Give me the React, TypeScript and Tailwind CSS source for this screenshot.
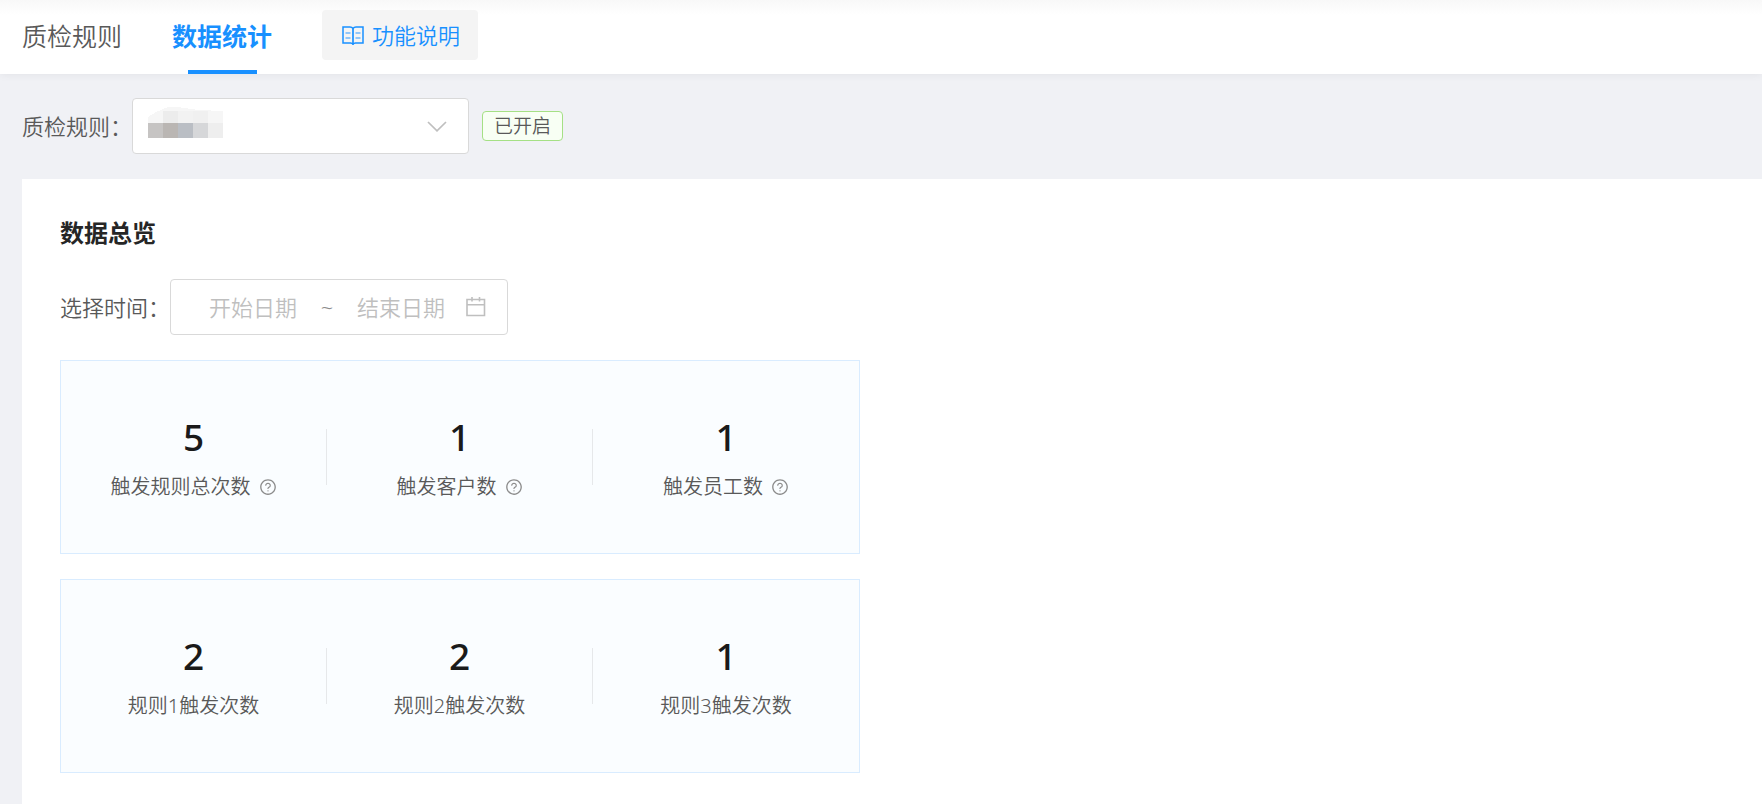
import React, { useState } from 'react';
import { AiOutlineQuestionCircle } from 'react-icons/ai';

interface Stat {
  label: string;
  value: number;
  help?: boolean;
}

const totals: Stat[] = [
  { label: '触发规则总次数', value: 5, help: true },
  { label: '触发客户数', value: 1, help: true },
  { label: '触发员工数', value: 1, help: true },
];

const ruleCounts: Stat[] = [
  { label: '规则1触发次数', value: 2 },
  { label: '规则2触发次数', value: 2 },
  { label: '规则3触发次数', value: 1 },
];

const BookIcon: React.FC = () => (
  <svg className="h-5 w-[22px]" viewBox="0 0 22 20" fill="none" stroke="currentColor" aria-hidden="true">
    <path d="M11 3.5 C10 2.1 9 2 8 2 H1 V18 H8.5 C10 18 10.6 18.3 11 19.3 C11.4 18.3 12 18 13.5 18 H21 V2 H14 C13 2 12 2.1 11 3.5 Z" strokeWidth="1.5" />
    <path d="M11 3.5 V19.5" strokeWidth="1.7" />
    <path d="M3.5 8 H8.5 M3.5 13 H8.5 M13.5 8 H18.5 M13.5 13 H18.5" strokeWidth="1.5" opacity="0.6" />
  </svg>
);

const ChevronIcon: React.FC = () => (
  <svg
    className="pointer-events-none absolute top-5 right-[22px] h-4 w-5 text-[#bfbfbf]"
    viewBox="0 0 20 16"
    fill="none"
    stroke="currentColor"
    strokeWidth="1.7"
    aria-hidden="true"
  >
    <path d="M1 4 L10 12.8 L19 4" />
  </svg>
);

const CalendarIcon: React.FC = () => (
  <svg
    className="h-6 w-6 text-[#bfbfbf]"
    viewBox="0 0 24 24"
    fill="none"
    stroke="currentColor"
    strokeWidth="1.6"
    aria-hidden="true"
  >
    <path d="M2 4.5 H19.5 V20.5 H2 Z M2 9.8 H19.5 M7 2 V6.5 M14.5 2 V6.5" />
  </svg>
);

const StatPanel: React.FC<{ stats: Stat[] }> = ({ stats }) => (
  <div className="grid max-w-[800px] grid-cols-3 border border-[#d9ecff] bg-[#fafdff] py-14">
    {stats.map((stat, index) => (
      <div key={stat.label} className="flex items-center">
        <div className="flex flex-1 flex-col items-center gap-6 pt-1">
          <div className="text-[37px] leading-8 font-medium text-[#1a1a1a]">{stat.value}</div>
          <div className="flex items-center gap-2 text-xl leading-5 font-[350] text-[#595959]">
            <span>{stat.label}</span>
            {stat.help && (
              <button type="button" aria-label={`${stat.label}说明`} className="text-[#8c8c8c]">
                <AiOutlineQuestionCircle className="h-[18px] w-[18px]" />
              </button>
            )}
          </div>
        </div>
        {index < stats.length - 1 && <div className="h-14 w-px bg-[#e6e8ea]" />}
      </div>
    ))}
  </div>
);

// Pixelated rule name
const MaskedName: React.FC = () => (
  <svg
    className="pointer-events-none absolute top-2 left-4 h-8 w-[75px]"
    viewBox="0 0 75 32"
    shapeRendering="crispEdges"
    aria-hidden="true"
  >
    <path d="M0 11 L8 6 L20 1 L30 1 L50 4 L75 5 V17 H0 Z" fill="#f6f6f6" />
    <rect x="15" y="5" width="15" height="12" fill="#ececec" />
    <rect x="30" y="5" width="15" height="12" fill="#f2f2f2" />
    <rect x="45" y="5" width="15" height="12" fill="#f0f0f0" />
    <rect x="0" y="17" width="15" height="15" fill="#c6c4c3" />
    <rect x="15" y="17" width="15" height="15" fill="#bab6b3" />
    <rect x="30" y="17" width="15" height="15" fill="#babec4" />
    <rect x="45" y="17" width="15" height="15" fill="#d6d7d9" />
    <rect x="60" y="17" width="15" height="15" fill="#eeeeee" />
  </svg>
);

const App: React.FC = () => {
  const [startDate, setStartDate] = useState('');
  const [endDate, setEndDate] = useState('');

  return (
    <div
      lang="zh-CN"
      className="flex min-h-screen flex-col bg-[#f0f1f5] font-['Noto_Sans','Noto_Sans_CJK_SC',sans-serif] text-[#595959]"
    >
      <header className="flex h-[74px] items-start bg-white bg-linear-to-b from-[#f8f8f8] to-white to-20% px-[22px] shadow-[0_1px_8px_rgba(0,0,0,0.06)]">
        <nav className="flex h-full gap-[50px] text-[25px]">
          <a href="#rules" className="flex h-full items-center font-[350]">
            质检规则
          </a>
          <a
            href="#stats"
            aria-current="page"
            className="relative flex h-full items-center font-bold text-[#1890ff]"
          >
            数据统计
            <span className="absolute bottom-0 left-4 h-1 w-[69px] bg-[#1890ff]" />
          </a>
        </nav>
        <button
          type="button"
          className="mt-[10px] ml-[50px] flex h-[50px] items-center gap-2 rounded bg-[#f4f4f4] pr-[18px] pl-5 text-[22px] font-[350] text-[#1890ff]"
        >
          <BookIcon />
          功能说明
        </button>
      </header>

      <div className="flex items-center px-[22px] pt-6 pb-[25px]">
        <label htmlFor="rule" className="text-[22px] font-[350]">
          质检规则：
        </label>
        <div className="relative w-[337px]">
          <select
            id="rule"
            className="h-14 w-full appearance-none rounded-sm border border-[#d9d9d9] bg-white px-4"
          >
            <option value=""></option>
          </select>
          <MaskedName />
          <ChevronIcon />
        </div>
        <span className="ml-[13px] rounded-sm border border-[#a5e085] bg-[#f8fff4] px-[11px] text-[19px] leading-7 font-[350]">
          已开启
        </span>
      </div>

      <main className="ml-[22px] flex-1 bg-white px-[38px] pt-9 pb-[30px]">
        <h2 className="text-2xl leading-9 font-bold text-[#262626]">数据总览</h2>

        <div className="mt-7 flex items-center">
          <label htmlFor="start-date" className="text-[22px] font-[350]">
            选择时间：
          </label>
          <div className="flex h-14 items-center rounded-sm border border-[#d9d9d9] bg-white px-[18px] text-[22px] font-[350]">
            <input
              id="start-date"
              type="text"
              placeholder="开始日期"
              value={startDate}
              onChange={(e) => setStartDate(e.target.value)}
              className="w-32 text-center outline-none placeholder:text-[#bfbfbf]"
            />
            <span className="w-5 text-center text-[#8c8c8c]">~</span>
            <input
              type="text"
              aria-label="结束日期"
              placeholder="结束日期"
              value={endDate}
              onChange={(e) => setEndDate(e.target.value)}
              className="w-32 text-center outline-none placeholder:text-[#bfbfbf]"
            />
            <CalendarIcon />
          </div>
        </div>

        <div className="mt-[25px] flex flex-col gap-[25px]">
          <StatPanel stats={totals} />
          <StatPanel stats={ruleCounts} />
        </div>
      </main>
    </div>
  );
};

export default App;
